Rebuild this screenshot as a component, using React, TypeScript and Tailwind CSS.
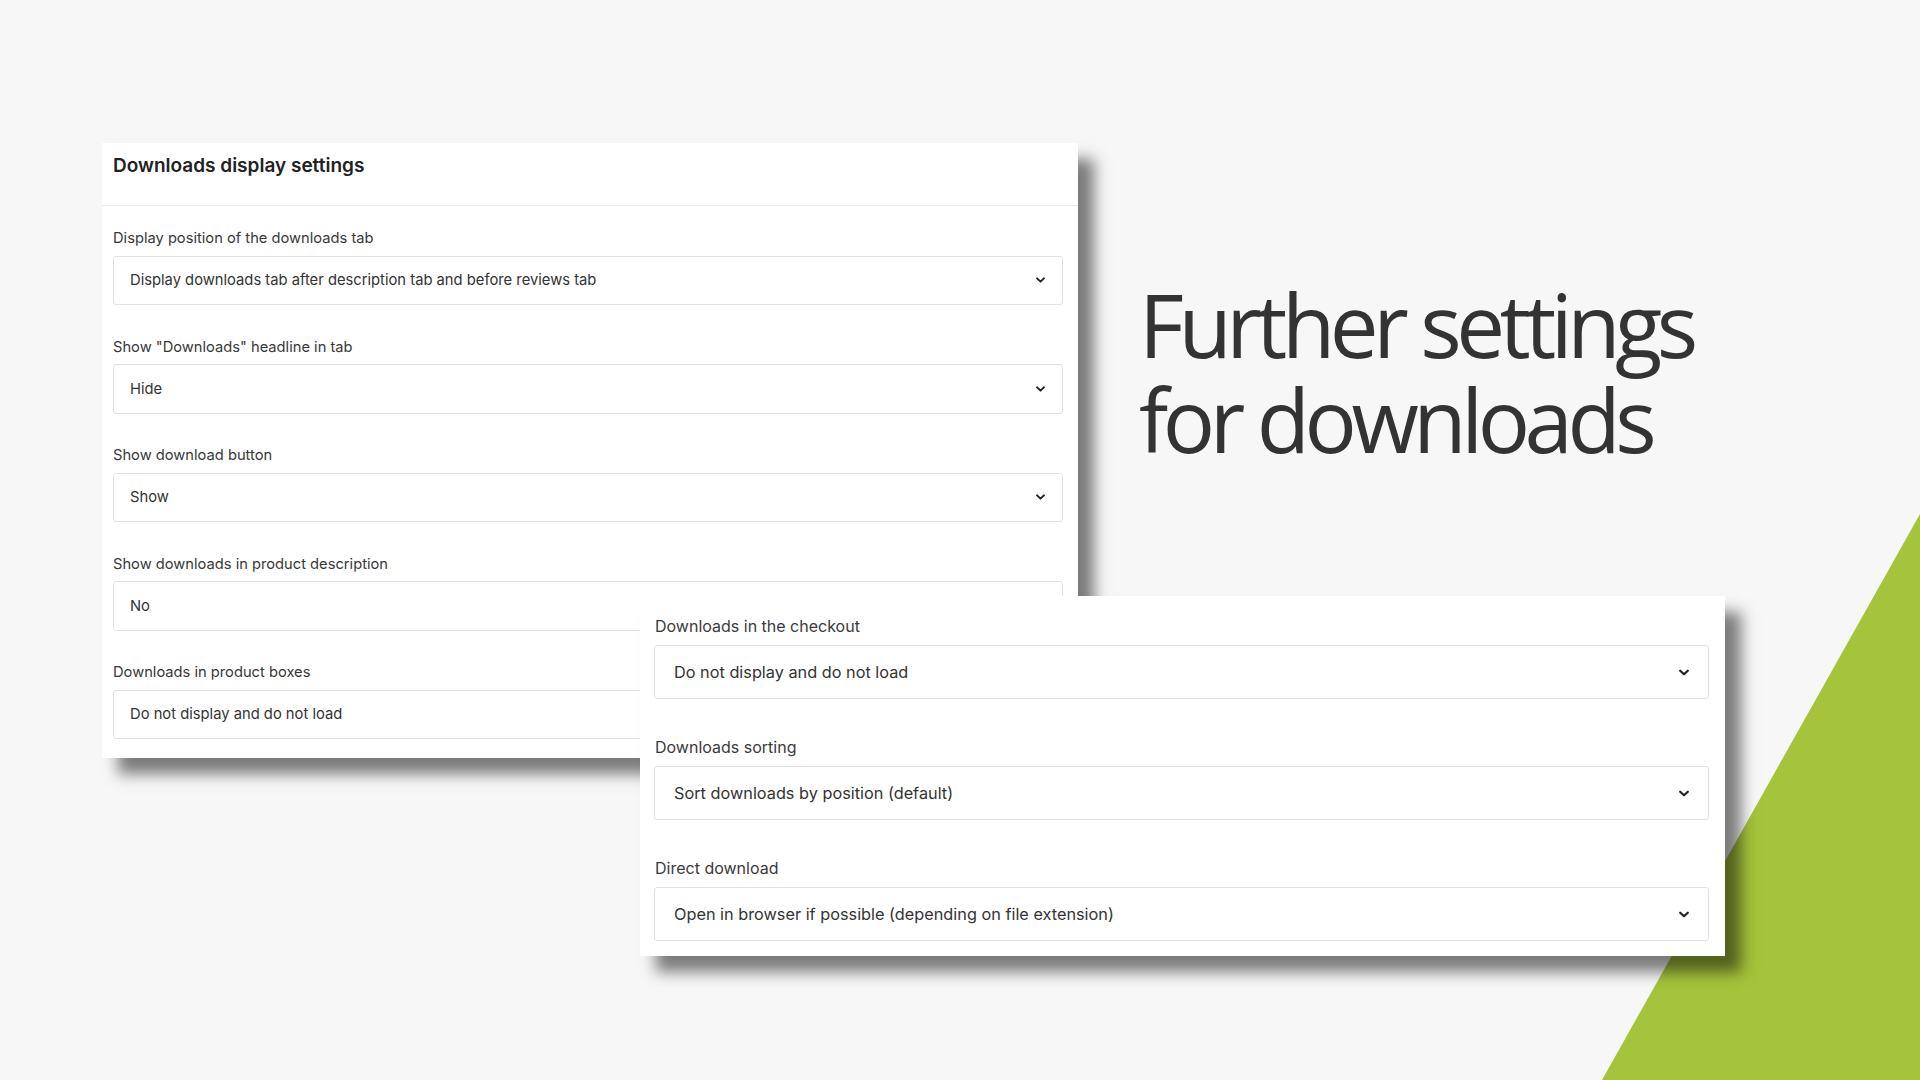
import React from 'react';

type Row = { label: string; value: string };

const displayRows: Row[] = [
  { label: 'Display position of the downloads tab', value: 'Display downloads tab after description tab and before reviews tab' },
  { label: 'Show "Downloads" headline in tab', value: 'Hide' },
  { label: 'Show download button', value: 'Show' },
  { label: 'Show downloads in product description', value: 'No' },
  { label: 'Downloads in product boxes', value: 'Do not display and do not load' },
];

const checkoutRows: Row[] = [
  { label: 'Downloads in the checkout', value: 'Do not display and do not load' },
  { label: 'Downloads sorting', value: 'Sort downloads by position (default)' },
  { label: 'Direct download', value: 'Open in browser if possible (depending on file extension)' },
];

function Chevron({ className }: { className?: string }) {
  return (
    <svg viewBox="0 0 10 6" className={className}>
      <path d="M1.2 1.2 5 4.8l3.8-3.6" fill="none" stroke="currentColor" strokeWidth="2.2" strokeLinecap="round" strokeLinejoin="round" />
    </svg>
  );
}

export default function App() {
  return (
    <div className="relative w-[1920px] h-[1080px] overflow-hidden bg-[#f7f7f7] font-['Inter','Liberation_Sans',sans-serif]">
      {/* green corner */}
      <svg className="absolute inset-0" width="1920" height="1080" viewBox="0 0 1920 1080">
        <polygon points="1920,514 1920,1080 1602,1080" fill="#a5c33b" />
      </svg>

      {/* display settings panel */}
      <div className="absolute left-[102px] top-[143px] w-[976px] h-[615px] bg-white shadow-[16px_16px_14px_rgba(0,0,0,0.5)]">
        <div className="px-[11px] pt-[11px] pb-[27px] border-b border-[#ebebeb]">
          <h2 className="text-[19px] leading-[24px] font-semibold text-[#222]">Downloads display settings</h2>
        </div>
        <div className="flex flex-col gap-[31.5px] pl-[11px] pr-[15px] pt-[22px]">
          {displayRows.map((row) => (
            <div key={row.label} className="flex flex-col gap-[7.5px]">
              <label className="text-[14.7px] leading-[20px] text-[#383838]">{row.label}</label>
              <div className="flex items-center justify-between h-[49.5px] pl-[16px] pr-[17px] border border-[#e2e2e2] rounded-[3px] text-[14.75px] text-[#333]">
                <span>{row.value}</span>
                <Chevron className="w-[9px] h-[6px] text-[#222]" />
              </div>
            </div>
          ))}
        </div>
      </div>

      {/* headline */}
      <h1 className="absolute left-[1139px] top-[277px] text-[87px] font-normal tracking-[-0.063em] text-[#333] font-['Open_Sans',sans-serif]">
        <span className="block h-[95px] leading-[95px]">Further settings</span>
        <span className="block h-[95px] leading-[95px]">for downloads</span>
      </h1>

      {/* checkout panel */}
      <div className="absolute left-[640px] top-[596px] w-[1085px] h-[360px] bg-white shadow-[16px_16px_14px_rgba(0,0,0,0.5)]">
        <div className="flex flex-col gap-[37px] pl-[14px] pr-[16px] pt-[19px]">
          {checkoutRows.map((row) => (
            <div key={row.label} className="flex flex-col gap-[8px]">
              <label className="text-[16px] leading-[22px] text-[#3a3a3a] pl-[1px]">{row.label}</label>
              <div className="flex items-center justify-between h-[54px] pl-[19px] pr-[19px] border border-[#e2e2e2] rounded-[3px] text-[16.3px] text-[#333]">
                <span>{row.value}</span>
                <Chevron className="w-[10px] h-[7px] text-[#222]" />
              </div>
            </div>
          ))}
        </div>
      </div>
    </div>
  );
}
